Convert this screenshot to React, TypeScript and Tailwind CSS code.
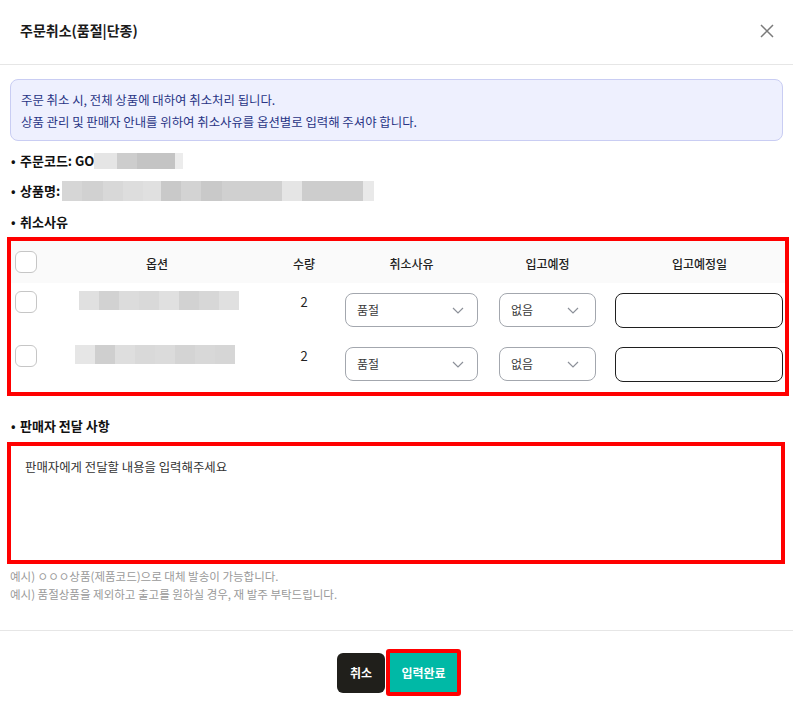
const optionBlurs = [
  { ml: 'ml-[31px]', shades: ['#e0e0e0', '#d2d2d2', '#dcdcdc', '#d9d9d9', '#e0e0e0', '#d2d2d2', '#d7d7d7', '#e0e0e0'] },
  { ml: 'ml-[27px]', shades: ['#e6e6e6', '#cfcfcf', '#dedede', '#d9d9d9', '#dbdbdb', '#d4d4d4', '#d8d8d8', '#d6d6d6'] },
]

const codeBlur = [
  { w: 23, c: '#e5e5e5' },
  { w: 20, c: '#cdcdcd' },
  { w: 38, c: '#c4c4c4' },
  { w: 8, c: '#ececec' },
]

const nameBlur = [
  { w: 20, c: '#d6d6d6' },
  { w: 21, c: '#d1d1d1' },
  { w: 20, c: '#d8d8d8' },
  { w: 20, c: '#dddddd' },
  { w: 18, c: '#e0e0e0' },
  { w: 20, c: '#c9c9c9' },
  { w: 20, c: '#d3d3d3' },
  { w: 21, c: '#c9c9c9' },
  { w: 60, c: '#d0d0d0' },
  { w: 20, c: '#e5e5e5' },
  { w: 61, c: '#cdcdcd' },
  { w: 11, c: '#e9e9e9' },
]

function Blur({ parts, h }: { parts: { w: number; c: string }[]; h: string }) {
  return (
    <div className={`flex ${h}`}>
      {parts.map((p, i) => (
        <div key={i} style={{ width: p.w, backgroundColor: p.c }} />
      ))}
    </div>
  )
}

function Checkbox() {
  return <div className="h-[22px] w-[22px] rounded-[6px] border border-[#c6c6c6] bg-white" />
}

function Chevron() {
  return (
    <svg width="12" height="7" viewBox="0 0 12 7" fill="none">
      <path d="M1 1l5 5 5-5" stroke="#8c9099" strokeWidth="1.2" />
    </svg>
  )
}

function Select({ value, width, pr }: { value: string; width: string; pr: string }) {
  return (
    <div
      className={`flex h-[34px] ${width} items-center justify-between rounded-[8px] border border-[#a3a7ae] bg-white pl-[11px] ${pr}`}
    >
      <span className="text-[12px] text-[#3a3a3a]">{value}</span>
      <Chevron />
    </div>
  )
}

function Label({ children, className }: { children: React.ReactNode; className: string }) {
  return (
    <div className={`flex h-5 items-center text-[13px] font-bold ${className}`}>
      <span className="w-[10px] pl-[1px] text-[12px]">•</span>
      {children}
    </div>
  )
}

export default function App() {
  return (
    <div className="h-[713px] w-[793px] bg-white font-['Noto_Sans_CJK_KR',sans-serif] text-[#111]">
      <div className="flex h-[65px] items-center justify-between border-b border-[#e6e6e6] pb-[3px] pl-5 pr-[19px]">
        <h1 className="text-[14px] font-semibold text-[#1a1a1a]">주문취소(품절|단종)</h1>
        <svg width="14" height="14" viewBox="0 0 14 14" fill="none">
          <path d="M1 1l12 12M13 1L1 13" stroke="#7a7a7a" strokeWidth="1.5" />
        </svg>
      </div>

      <div className="px-[10px] pt-[14px]">
        <div className="h-[62px] rounded-[8px] border border-[#c9cdf3] bg-[#eef0fe] px-[10px] py-[9px] text-[12.4px] leading-[22px] text-[#283485]">
          <p>주문 취소 시, 전체 상품에 대하여 취소처리 됩니다.</p>
          <p>상품 관리 및 판매자 안내를 위하여 취소사유를 옵션별로 입력해 주셔야 합니다.</p>
        </div>

        <Label className="mt-[10px]">
          <span>주문코드: GO</span>
          <Blur parts={codeBlur} h="h-[16px]" />
        </Label>
        <Label className="mt-[10px]">
          <span>상품명:</span>
          <div className="ml-[2px]">
            <Blur parts={nameBlur} h="h-[20px]" />
          </div>
        </Label>
        <Label className="mt-[11px]">
          <span>취소사유</span>
        </Label>

        <div className="-ml-[3px] mt-[5px] w-[782px] border-4 border-[#ff0000]">
          <div className="grid h-[42px] grid-cols-[37px_218px_76px_139px_133px_171px] items-center bg-[#fafafa] text-center text-[12px] font-medium text-[#222]">
            <div className="pl-[4px]">
              <Checkbox />
            </div>
            <div className="pt-[3px]">옵션</div>
            <div className="pt-[3px]">수량</div>
            <div className="pt-[3px]">취소사유</div>
            <div className="pt-[3px]">입고예정</div>
            <div className="pt-[3px]">입고예정일</div>
          </div>
          {optionBlurs.map((row, i) => (
            <div
              key={i}
              className={`grid ${i === 0 ? 'h-[54px]' : 'h-[55px]'} grid-cols-[37px_218px_76px_139px_133px_171px] items-start`}
            >
              <div className="pl-[4px] pt-[8px]">
                <Checkbox />
              </div>
              <div className={`pt-[8px] ${row.ml}`}>
                <div className="flex h-[19px]">
                  {row.shades.map((c, j) => (
                    <div key={j} className="w-[20px]" style={{ backgroundColor: c }} />
                  ))}
                </div>
              </div>
              <div className="pt-[9px] text-center text-[13px] leading-5 text-[#222]">2</div>
              <div className="pl-[3px] pt-[10px]">
                <Select value="품절" width="w-[133px]" pr="pr-[13px]" />
              </div>
              <div className="pl-[18px] pt-[10px]">
                <Select value="없음" width="w-[97px]" pr="pr-[16px]" />
              </div>
              <div className="pl-[1px] pt-[10px]">
                <div className="h-[35px] w-[168px] rounded-[8px] border border-[#1f1f1f] bg-white" />
              </div>
            </div>
          ))}
        </div>

        <Label className="mt-[20px]">
          <span>판매자 전달 사항</span>
        </Label>

        <div className="-ml-[3px] mt-[6px] h-[122px] w-[778px] border-4 border-[#ff0000] bg-white pl-[14px] pt-[12px]">
          <p className="text-[12.4px] leading-[18px] text-[#333]">판매자에게 전달할 내용을 입력해주세요</p>
        </div>

        <div className="mt-[3px] text-[11.5px] leading-[18px] text-[#9a9a9a]">
          <p>예시) ㅇㅇㅇ상품(제품코드)으로 대체 발송이 가능합니다.</p>
          <p>예시) 품절상품을 제외하고 출고를 원하실 경우, 재 발주 부탁드립니다.</p>
        </div>
      </div>

      <div className="mt-[27px] border-t border-[#e6e6e6] pt-[18px]">
        <div className="flex items-center justify-center gap-[1px] pl-[5px]">
          <button className="h-[40px] w-[48px] rounded-[6px] bg-[#201f1b] text-[12px] font-bold text-white">
            취소
          </button>
          <div className="rounded-[3px] border-4 border-[#ff0000]">
            <button className="h-[39px] w-[67px] bg-[#00b9a6] text-[12px] font-bold text-white">입력완료</button>
          </div>
        </div>
      </div>
    </div>
  )
}
